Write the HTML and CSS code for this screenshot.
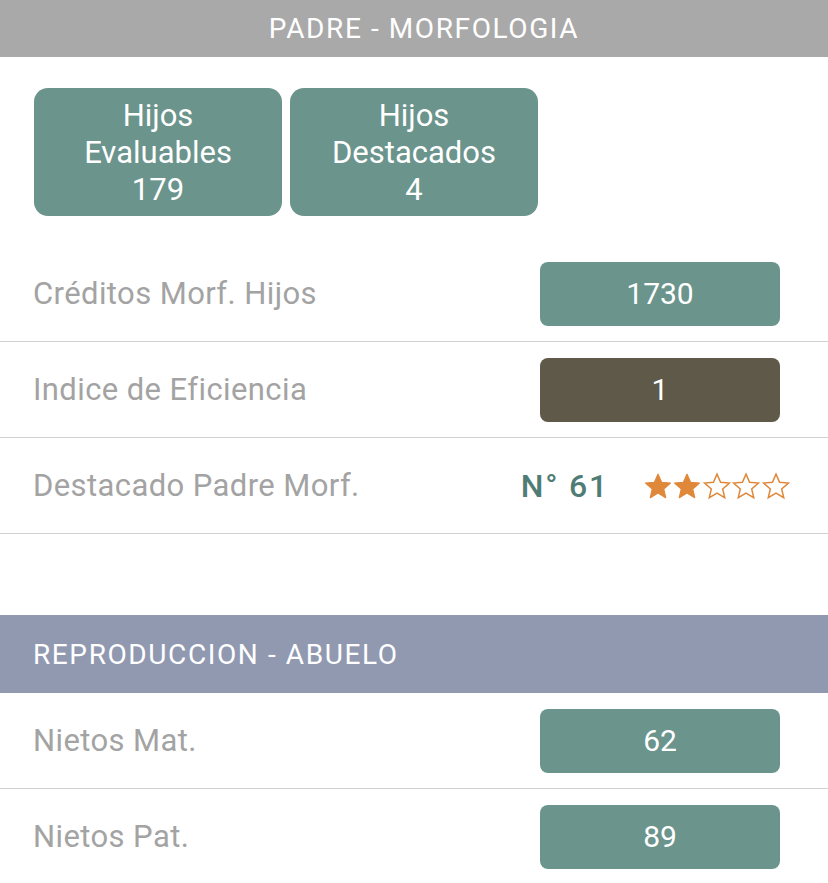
FILE: index.html
```html
<!DOCTYPE html>
<html lang="es">
<head>
<meta charset="utf-8">
<link rel="stylesheet" href="styles.css">
</head>
<body>
<div class="section-title center">PADRE - MORFOLOGIA</div>
<div class="tiles">
  <div class="tile"><span>Hijos</span><span>Evaluables</span><span>179</span></div>
  <div class="tile"><span>Hijos</span><span>Destacados</span><span>4</span></div>
</div>
<div class="rows">
  <div class="row"><span class="label">Créditos Morf. Hijos</span><span class="pill teal">1730</span></div>
  <div class="row"><span class="label">Indice de Eficiencia</span><span class="pill dark">1</span></div>
  <div class="row">
    <span class="label">Destacado Padre Morf.</span>
    <div class="rank">
      <span class="rank-num">N° 61</span>
      <span class="stars">
        <svg class="star" viewBox="0 0 24 24"><path class="full" d="M12 2.5l2.85 6.55 7.1.6-5.4 4.7 1.62 6.95L12 17.6l-6.17 3.7 1.62-6.95-5.4-4.7 7.1-.6z"/></svg>
        <svg class="star" viewBox="0 0 24 24"><path class="full" d="M12 2.5l2.85 6.55 7.1.6-5.4 4.7 1.62 6.95L12 17.6l-6.17 3.7 1.62-6.95-5.4-4.7 7.1-.6z"/></svg>
        <svg class="star" viewBox="0 0 24 24"><path class="empty" d="M12 2.5l2.85 6.55 7.1.6-5.4 4.7 1.62 6.95L12 17.6l-6.17 3.7 1.62-6.95-5.4-4.7 7.1-.6z"/></svg>
        <svg class="star" viewBox="0 0 24 24"><path class="empty" d="M12 2.5l2.85 6.55 7.1.6-5.4 4.7 1.62 6.95L12 17.6l-6.17 3.7 1.62-6.95-5.4-4.7 7.1-.6z"/></svg>
        <svg class="star" viewBox="0 0 24 24"><path class="empty" d="M12 2.5l2.85 6.55 7.1.6-5.4 4.7 1.62 6.95L12 17.6l-6.17 3.7 1.62-6.95-5.4-4.7 7.1-.6z"/></svg>
      </span>
    </div>
  </div>
</div>
<div class="section-title left blue">REPRODUCCION - ABUELO</div>
<div class="rows">
  <div class="row"><span class="label">Nietos Mat.</span><span class="pill teal">62</span></div>
  <div class="row"><span class="label">Nietos Pat.</span><span class="pill teal">89</span></div>
</div>
</body>
</html>
```
FILE: styles.css
```css
html, body {
  margin: 0;
  padding: 0;
  background: #ffffff;
  font-family: Roboto, "Liberation Sans", sans-serif;
  overflow: hidden;
}

.section-title {
  height: 57px;
  display: flex;
  align-items: center;
  background: #a9a9a9;
  color: #ffffff;
  font-size: 28px;
  letter-spacing: 1.6px;
}

.section-title.center {
  justify-content: center;
  padding-left: 20px;
}

.section-title.left {
  padding-left: 33px;
}

.section-title.blue {
  background: #9199b1;
  height: 78px;
  margin-top: 81px;
}

.tiles {
  display: flex;
  gap: 8px;
  padding: 31px 34px 0;
}

.tile {
  width: 248px;
  height: 128px;
  border-radius: 14px;
  background: #6a948c;
  color: #ffffff;
  display: flex;
  flex-direction: column;
  align-items: center;
  justify-content: center;
  font-size: 31px;
  line-height: 37px;
}

.rows {
  margin-top: 30px;
}

.section-title + .rows {
  margin-top: 0;
}

.row {
  height: 95px;
  border-bottom: 1px solid #d2d2d2;
  display: flex;
  align-items: center;
  justify-content: space-between;
  padding: 0 48px 0 33px;
}

.label {
  color: #a3a3a3;
  font-size: 31px;
  letter-spacing: 0.4px;
}

.pill {
  width: 240px;
  height: 64px;
  border-radius: 8px;
  display: flex;
  align-items: center;
  justify-content: center;
  color: #ffffff;
  font-size: 30px;
}

.pill.teal { background: #6a948c; }
.pill.dark { background: #5e5948; }

.rank {
  display: flex;
  align-items: center;
  gap: 34px;
  margin-right: -10px;
}

.rank-num {
  color: #4f7d75;
  font-size: 32px;
  font-weight: 500;
  letter-spacing: 1.8px;
}

.stars {
  display: flex;
}

.star {
  width: 30px;
  height: 30px;
  margin-right: -0.6px;
}

.star .full {
  fill: #e0883a;
  stroke: #e0883a;
  stroke-width: 1;
  stroke-linejoin: round;
}

.star .empty {
  fill: none;
  stroke: #e0883a;
  stroke-width: 1.2;
  stroke-linejoin: miter;
}
```
